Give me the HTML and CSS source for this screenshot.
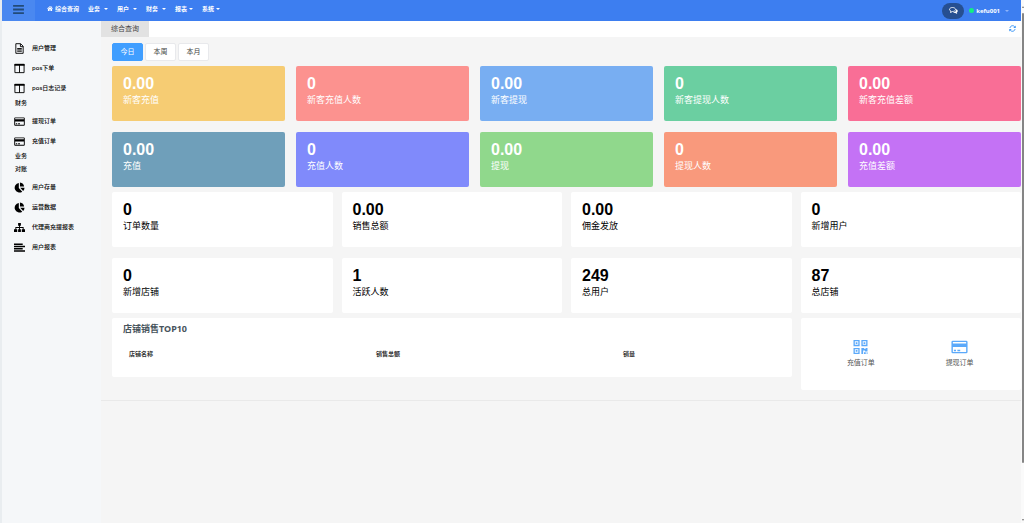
FILE: index.html
```html
<!DOCTYPE html>
<html lang="zh-CN">
<head>
<meta charset="utf-8">
<title>综合查询</title>
<link rel="stylesheet" href="styles.css">
</head>
<body>
<svg class="sprite" aria-hidden="true">
  <symbol id="card" viewBox="0 0 24 20"><path fill-rule="evenodd" d="M2.500 1h19A2 2 0 0 1 23.500 3v14a2 2 0 0 1-2 2h-19a2 2 0 0 1-2-2V3a2 2 0 0 1 2-2zM2.500 3v2h19V3zM2.500 10v7h19v-7zM4 14h3v2H4zM9 14h4v2H9z"/></symbol>
  <symbol id="columns" viewBox="0 0 24 22"><path fill="none" stroke="currentColor" stroke-width="2" d="M2 2h20v18H2zM12 3v17"/><path d="M1 1h22v4H1z"/></symbol>
  <symbol id="file" viewBox="0 0 20 24"><path fill="none" stroke="currentColor" stroke-width="2" d="M2 1.500h10.500L18 7v15.500H2zM12 2v6h6M5 12h10M5 15h10M5 18h10"/></symbol>
  <symbol id="pie" viewBox="0 0 24 24"><path d="M10.500 2v11l7.500 8A10.500 10.500 0 1 1 10.500 2zM13 1a10 10 0 0 1 9 9h-9zM13.500 12.500H23a10 10 0 0 1-3 7z"/></symbol>
  <symbol id="tree" viewBox="0 0 24 22"><path d="M9 1h6v6h-2v3h8v5h3v6h-7v-6h2v-3h-6v3h2v6H9v-6h2v-3H5v3h2v6H0v-6h3v-5h8V7H9z"/></symbol>
  <symbol id="lines" viewBox="0 0 24 20"><path d="M0 1h19v3.500H0zM0 6h24v3.500H0zM0 11h19v3.500H0zM0 16h24v3.500H0z"/></symbol>
</svg>
<div class="app">
  <header class="topbar">
    <button class="menu-toggle" aria-label="菜单"><svg viewBox="0 0 12 10"><path stroke="currentColor" stroke-width="2" d="M0 1h12M0 5h12M0 9h12"/></svg></button>
    <nav class="topnav">
      <a href="#"><svg class="home" viewBox="0 0 14 12"><path d="M7 0l7 6-1 1-6-5-6 5-1-1zM7 3l5 4v5H8V8H6v4H2V7zM10 1h2v3l-2-2z"/></svg>综合查询</a>
      <a href="#">业务<i class="caret"></i></a>
      <a href="#">用户<i class="caret"></i></a>
      <a href="#">财务<i class="caret"></i></a>
      <a class="tight" href="#">报表<i class="caret"></i></a>
      <a class="tight" href="#">系统<i class="caret"></i></a>
    </nav>
    <div class="account">
      <button class="chat" aria-label="消息"><svg viewBox="0 0 18 14"><path fill="none" stroke="currentColor" stroke-width="1.800" d="M7 1c3 0 6 1.500 6 4s-3 4-6 4l-4 2 1-3C2 7.500 1 6.500 1 5c0-2.500 3-4 6-4z"/><path d="M14.500 4c4 2 3.500 6 1 7l1 3-4-2c-2 0-4-.5-5-1.500 4 0 7.500-2 7-6.500z"/></svg></button>
      <button class="user"><i class="dot"></i>kefu001<i class="caret"></i></button>
    </div>
  </header>
  <div class="body">
    <aside class="sidebar">
      <a class="item" href="#"><svg><use href="#file"/></svg>用户管理</a>
      <a class="item" href="#"><svg><use href="#columns"/></svg>pos下单</a>
      <a class="item" href="#"><svg><use href="#columns"/></svg>pos日志记录</a>
      <span class="group">财务</span>
      <a class="item" href="#"><svg><use href="#card"/></svg>提现订单</a>
      <a class="item" href="#"><svg><use href="#card"/></svg>充值订单</a>
      <span class="group">业务</span>
      <span class="group">对账</span>
      <a class="item" href="#"><svg><use href="#pie"/></svg>用户存量</a>
      <a class="item" href="#"><svg><use href="#pie"/></svg>运营数据</a>
      <a class="item" href="#"><svg><use href="#tree"/></svg>代理商充提报表</a>
      <a class="item" href="#"><svg><use href="#lines"/></svg>用户报表</a>
    </aside>
    <main class="main">
      <div class="tabs">
        <a class="tab" href="#">综合查询</a>
        <button class="refresh" aria-label="刷新"><svg viewBox="0 0 14 14"><path fill="none" stroke="currentColor" stroke-width="2" d="M2 6c.5-5 7-6 9.500-2.500M12 8c-.5 5-7 6-9.500 2.500"/><path d="M13.500 1v5h-5zM.5 13V8h5z"/></svg></button>
      </div>
      <div class="content">
        <div class="ranges">
          <button class="range active">今日</button>
          <button class="range">本周</button>
          <button class="range">本月</button>
        </div>
        <section class="grid five">
          <div class="stat yellow"><strong>0.00</strong><span>新客充值</span></div>
          <div class="stat coral"><strong>0</strong><span>新客充值人数</span></div>
          <div class="stat blue"><strong>0.00</strong><span>新客提现</span></div>
          <div class="stat green"><strong>0</strong><span>新客提现人数</span></div>
          <div class="stat pink"><strong>0.00</strong><span>新客充值差额</span></div>
          <div class="stat teal"><strong>0.00</strong><span>充值</span></div>
          <div class="stat indigo"><strong>0</strong><span>充值人数</span></div>
          <div class="stat lime"><strong>0.00</strong><span>提现</span></div>
          <div class="stat orange"><strong>0</strong><span>提现人数</span></div>
          <div class="stat purple"><strong>0.00</strong><span>充值差额</span></div>
        </section>
        <section class="grid four">
          <div class="stat"><strong>0</strong><span>订单数量</span></div>
          <div class="stat"><strong>0.00</strong><span>销售总额</span></div>
          <div class="stat"><strong>0.00</strong><span>佣金发放</span></div>
          <div class="stat"><strong>0</strong><span>新增用户</span></div>
          <div class="stat"><strong>0</strong><span>新增店铺</span></div>
          <div class="stat"><strong>1</strong><span>活跃人数</span></div>
          <div class="stat"><strong>249</strong><span>总用户</span></div>
          <div class="stat"><strong>87</strong><span>总店铺</span></div>
        </section>
        <section class="grid four bottom">
          <div class="panel ranking">
            <h2>店铺销售TOP10</h2>
            <table><thead><tr><th>店铺名称</th><th>销售总额</th><th>销量</th></tr></thead></table>
          </div>
          <div class="panel shortcuts">
            <a href="#"><svg viewBox="0 0 16 16"><path fill-rule="evenodd" d="M0 0h7v7H0zM1.500 1.500v4h4v-4zM2.500 2.500h2v2h-2zM9 0h7v7H9zM10.500 1.500v4h4v-4zM11.500 2.500h2v2h-2zM0 9h7v7H0zM1.500 10.500v4h4v-4zM2.500 11.500h2v2h-2zM9 9h3v1h2V9h2v4h-3v-1h-2v4H9zM12 14h2v2h-2zM15 14h1v2h-1z"/></svg>充值订单</a>
            <a href="#"><svg><use href="#card"/></svg>提现订单</a>
          </div>
        </section>
      </div>
    </main>
  </div>
  <div class="scrollbar"><i class="up"></i><i class="thumb"></i><i class="down"></i></div>
</div>
</body>
</html>
```
FILE: styles.css
```css
* { box-sizing: border-box; }
body {
  margin: 0;
  background: #fff;
  color: #222;
  font: 6px/8px "Noto Sans", "Noto Sans CJK SC", sans-serif;
}
a { color: inherit; text-decoration: none; }
button { border: 0; padding: 0; background: none; color: inherit; font: inherit; }
svg { fill: currentColor; flex: none; }
.sprite { display: none; }
.app {
  display: grid;
  grid-template: 21px 1fr / 1fr 3px;
  min-height: 100vh;
  padding-left: 2px;
  background: linear-gradient(90deg, #e9edf0 2px, #fff 2px);
}
.topbar {
  display: flex;
  background: #3d7ef0;
  color: #fff;
  font-weight: 700;
  border-top-left-radius: 2px;
}
.menu-toggle {
  display: grid;
  place-items: center;
  width: 33px;
  padding-bottom: 2px;
  background: #4a88f0;
  color: #224b78;
}
.menu-toggle svg { width: 11px; height: 9px; }
.topnav { display: flex; flex: 1; gap: 9px; padding: 4px 0 0 12px; }
.topnav a { display: flex; align-items: center; height: 9px; white-space: nowrap; }
.topnav .home { width: 6px; height: 5px; margin-right: 2px; }
.caret {
  margin-left: 4px;
  border: 2px solid transparent;
  border-top-color: currentColor;
  border-bottom: 0;
}
.topnav .tight .caret { margin-left: 2px; }
.account { display: flex; align-items: center; gap: 5px; padding-right: 12px; }
.chat {
  display: grid;
  place-items: center;
  width: 22px;
  height: 16px;
  border-radius: 8px;
  background: #264f91;
}
.chat svg { width: 9px; height: 7px; }
.user { display: flex; align-items: center; }
.user .caret { color: #8db3fa; margin-left: 5px; }
.dot { width: 5px; height: 5px; margin-right: 2px; border-radius: 50%; background: #12ef83; }
.body { display: grid; grid-template-columns: 99px 1fr; grid-row: 2; min-width: 0; }
.sidebar {
  display: flex;
  flex-direction: column;
  padding: 17px 0 0 12px;
  background: #f5f7f9;
  color: #000;
  font-weight: 500;
}
.item { display: flex; align-items: center; gap: 7px; height: 20px; white-space: nowrap; }
.item svg { width: 11px; height: 11px; }
.group { height: 13px; padding: 1px 0 0 1px; }
.main { background: #f5f5f5; min-width: 0; }
.tabs {
  display: flex;
  justify-content: space-between;
  height: 16px;
  background: #fff;
  font-size: 7px;
}
.tab { padding: 4px 10px; background: #e2e2e2; color: #444; }
.refresh { padding: 0 5px 1px 0; color: #3d97f5; }
.refresh svg { width: 7px; height: 7px; display: block; }
.content { padding: 6px 0 10px 11px; border-bottom: 1px solid #e9e9e9; }
.ranges { display: flex; gap: 2px; margin-bottom: 5px; }
.range {
  width: 31px;
  height: 18px;
  border: 1px solid #e8e9ec;
  border-radius: 2px;
  background: #fff;
  color: #444;
  font-size: 7px;
}
.range.active { background: #409eff; border-color: #409eff; color: #fff; }
.grid { display: grid; gap: 11px; }
.five { grid-template-columns: repeat(5, 1fr); color: #fff; }
.four { grid-template-columns: repeat(4, 1fr); column-gap: 9px; margin-top: 5px; color: #000; }
.stat {
  display: flex;
  flex-direction: column;
  height: 55px;
  padding: 9px 11px;
  border-radius: 2px;
  background: #fff;
  font-size: 9px;
  line-height: 16px;
}
.stat strong { font: 700 16px/17px "Liberation Sans", Arial, sans-serif; }
.yellow { background: #f6cc73; }
.coral { background: #fc928f; }
.blue { background: #78aef2; }
.green { background: #6bcfa1; }
.pink { background: #f96e96; }
.teal { background: #6f9fba; }
.indigo { background: #808afb; }
.lime { background: #90d88c; }
.orange { background: #f9997c; }
.purple { background: #c472f5; }
.bottom { align-items: start; }
.panel { border-radius: 2px; background: #fff; }
.ranking { grid-column: span 3; padding: 4px 11px 15px; color: #48545c; }
.ranking h2 { margin: 0 0 11px; font-size: 9px; line-height: 14px; }
.ranking table { width: 100%; table-layout: fixed; border-spacing: 0; }
.ranking th { padding: 3px 6px 4px; text-align: left; color: #333; line-height: 8px; }
.ranking th:nth-child(-n+2) { width: 247px; }
.shortcuts { display: grid; grid-template-columns: 1fr 1fr; height: 72px; padding: 22px 12px 0 11px; color: #555; }
.shortcuts a { display: flex; flex-direction: column; align-items: center; gap: 2px; font-size: 7px; line-height: 14px; }
.shortcuts svg { width: 17px; height: 14px; color: #5ba9fa; }
.scrollbar {
  display: flex;
  flex-direction: column;
  align-items: flex-end;
  grid-area: 1 / 2 / 3 / 3;
  padding: 5px 0 2px;
  background: #fafafa;
}
.up, .down { border: 1px solid transparent; border-bottom: 2px solid #777; }
.down { margin-top: auto; border-top: 2px solid #777; border-bottom: 0; }
.thumb { width: 2px; height: 86vh; margin-top: 5px; border-radius: 1px; background: #858585; }
```
